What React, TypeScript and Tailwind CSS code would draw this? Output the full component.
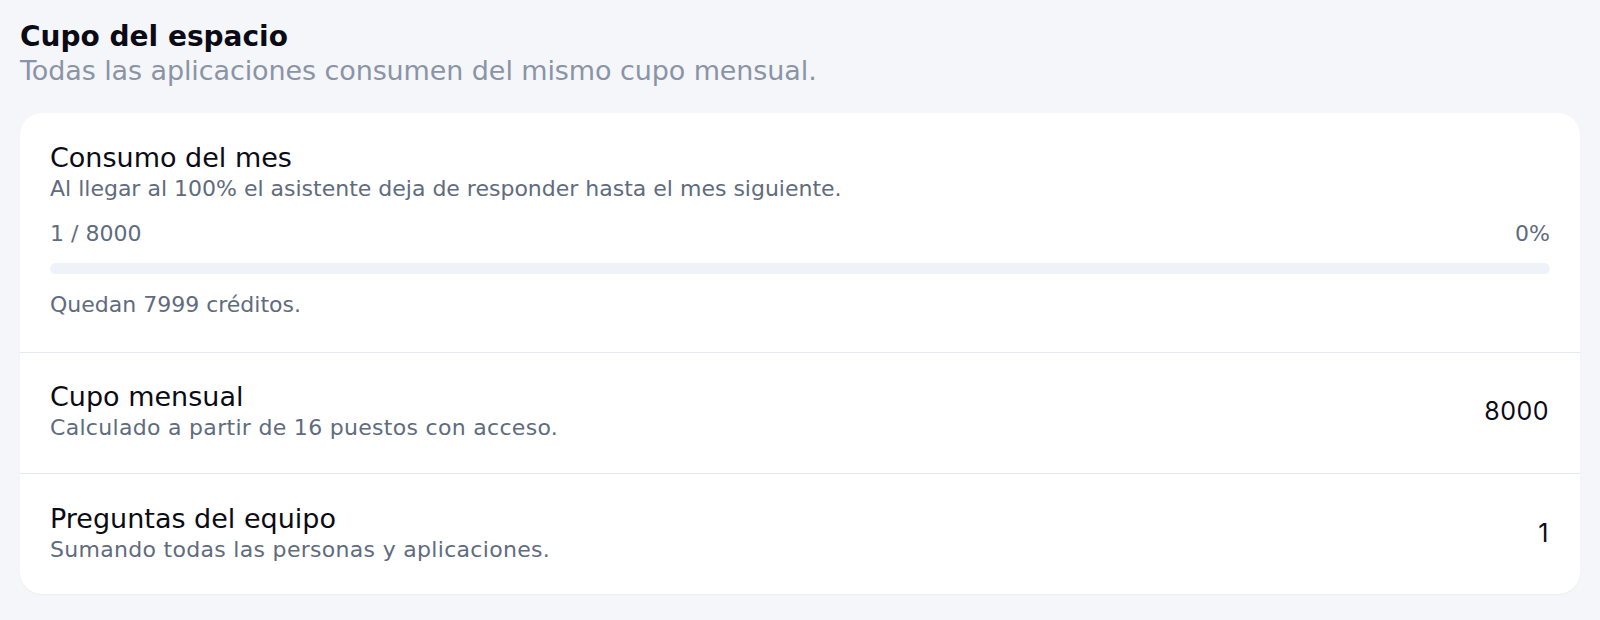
import React from "react";

// Poppins isn't installed; DejaVu Sans has close enough proportions
const sans = { fontFamily: '"DejaVu Sans", "Noto Sans", sans-serif' };
const numeric = { fontFamily: '"Inter", "Liberation Sans", sans-serif' };

interface StatRowProps {
  title: string;
  description: string;
  value: string;
  last?: boolean;
}

const StatRow: React.FC<StatRowProps> = ({ title, description, value, last }) => (
  <div
    className={`flex items-center justify-between pl-[30px] pr-[31px] ${
      last ? "pt-[28px] pb-[30px]" : "pt-[27px] pb-[31px] border-b border-[#e6e9ef]"
    }`}
  >
    <div className="flex flex-col">
      <h3 className="text-[27px] leading-[34px] text-[#0b0b16]">{title}</h3>
      <p className="text-[22px] leading-[28px] text-[#5f6b7e] tracking-[0.3px]">
        {description}
      </p>
    </div>
    <span className="text-[25px] leading-[32px] text-[#0b0b16] tracking-[0.5px]" style={numeric}>
      {value}
    </span>
  </div>
);

export default function App() {
  const used = 1;
  const quota = 8000;
  const pct = Math.round((used / quota) * 100);

  return (
    <div className="min-h-screen w-full bg-[#f5f6fa] px-[20px] pt-[19px] pb-[26px]" style={sans}>
      <h1 className="text-[28px] leading-[36px] font-bold text-[#0b0b16]">Cupo del espacio</h1>
      <p className="text-[27px] leading-[32px] text-[#8a94a6] tracking-[-0.1px]">
        Todas las aplicaciones consumen del mismo cupo mensual.
      </p>

      <div className="mt-[26px] bg-white rounded-[22px] shadow-[0_1px_2px_rgba(16,24,40,0.04)]">
        {/* Monthly usage */}
        <div className="pl-[30px] pr-[30px] pt-[28px] pb-[33px] border-b border-[#e6e9ef]">
          <h3 className="text-[27px] leading-[34px] text-[#0b0b16]">Consumo del mes</h3>
          <p className="text-[22px] leading-[28px] text-[#5f6b7e]">
            Al llegar al 100% el asistente deja de responder hasta el mes siguiente.
          </p>
          <div className="mt-[17px] flex justify-between text-[22px] leading-[28px] text-[#5f6b7e]">
            <span>
              {used} / {quota}
            </span>
            <span>{pct}%</span>
          </div>
          <div className="mt-[15px] h-[11px] w-full rounded-full bg-[#eff2f7] overflow-hidden">
            <div className="h-full rounded-full bg-[#3b82f6]" style={{ width: `${pct}%` }} />
          </div>
          <p className="mt-[17px] text-[22px] leading-[28px] text-[#5f6b7e]">
            Quedan {quota - used} créditos.
          </p>
        </div>

        <StatRow
          title="Cupo mensual"
          description="Calculado a partir de 16 puestos con acceso."
          value="8000"
        />
        <StatRow
          title="Preguntas del equipo"
          description="Sumando todas las personas y aplicaciones."
          value="1"
          last
        />
      </div>
    </div>
  );
}
